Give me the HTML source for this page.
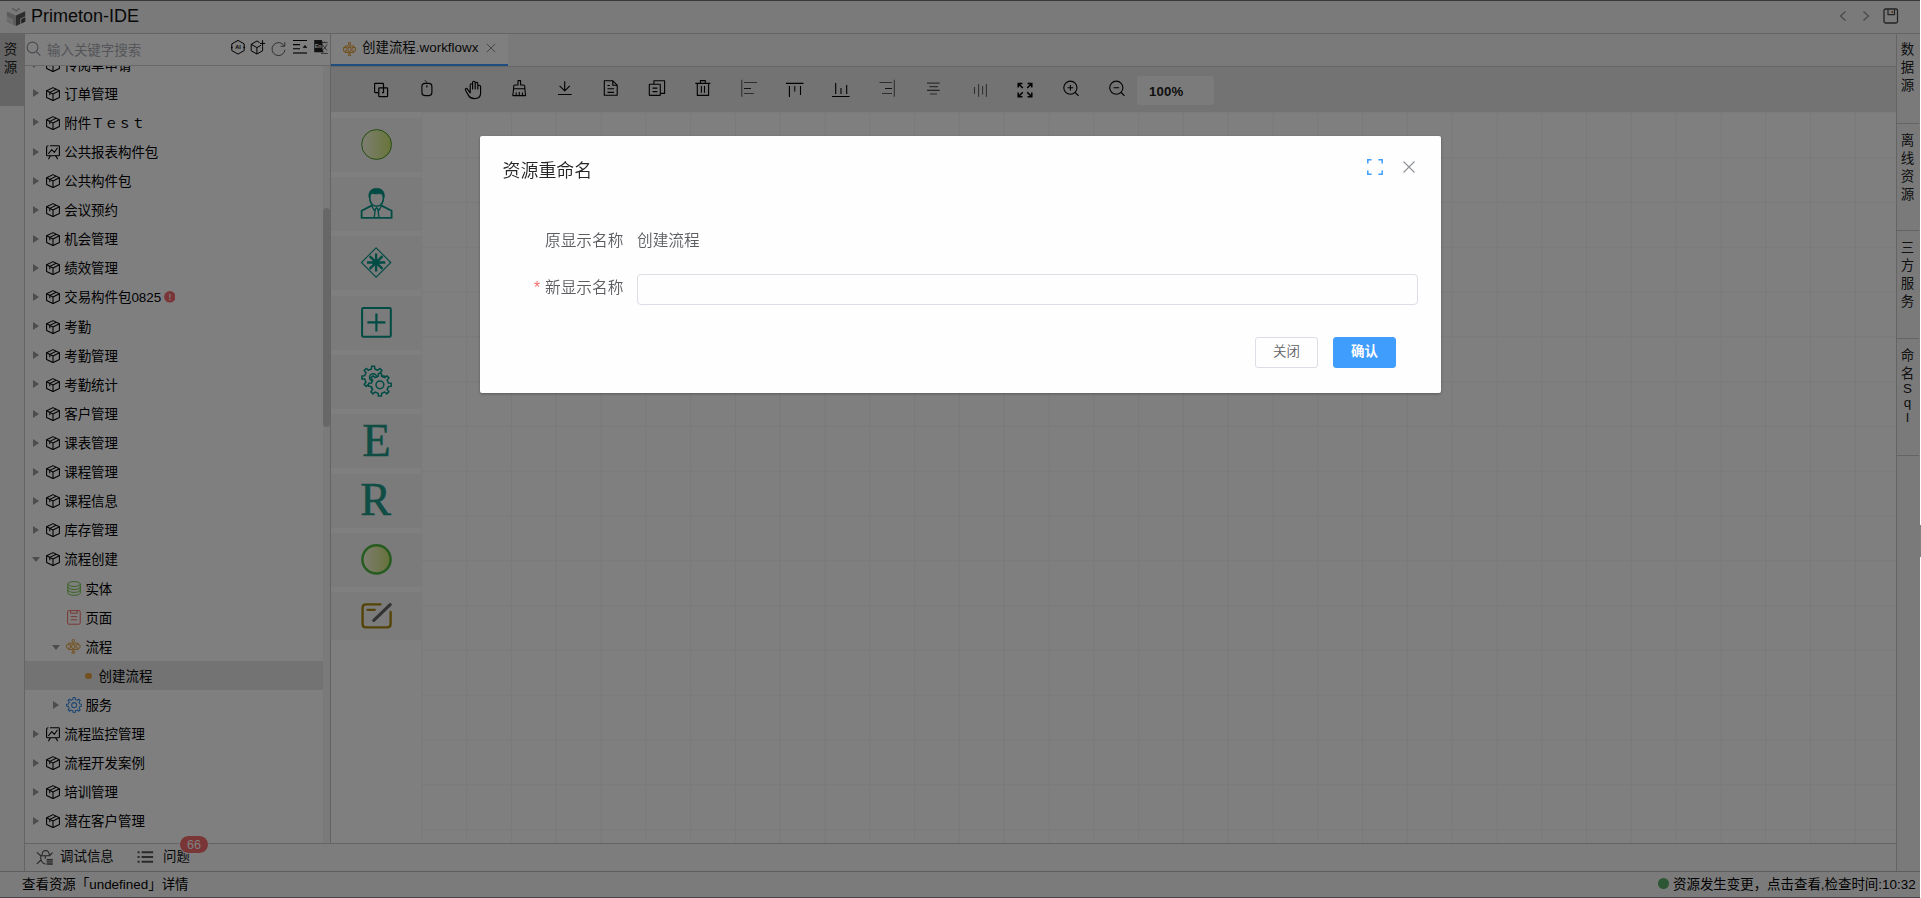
<!DOCTYPE html>
<html lang="zh-CN">
<head>
<meta charset="utf-8">
<title>Primeton-IDE</title>
<style>
*{box-sizing:border-box;margin:0;padding:0}
html,body{width:1921px;height:898px;overflow:hidden;background:#fff}
body{position:relative;font-family:"Liberation Sans","Noto Sans CJK SC",sans-serif;font-size:13.44px;color:#111;}
.abs{position:absolute}
#app{position:absolute;left:0;top:0;width:1920px;height:898px;background:#fff;overflow:hidden}
#topline{position:absolute;left:0;top:0;width:1920px;height:1px;background:#3a3a3a;z-index:30}
#botline{position:absolute;left:0;top:897px;width:1920px;height:1px;background:#4a4444;z-index:30}
#header{position:absolute;left:0;top:1px;width:1920px;height:33px;background:#f5f5f5;border-bottom:1px solid #c8c8c8}
#title{position:absolute;left:31px;top:4px;font-size:18px;line-height:22px;color:#111;letter-spacing:0}
#lstrip{position:absolute;left:0;top:34px;width:25px;height:837px;background:#f7f7f7;border-right:1px solid #c8c8c8}
#lstrip .act{position:absolute;left:0;top:0;width:24px;height:72px;background:#cacaca;color:#222;font-size:13.44px;line-height:18px;text-align:center;padding-top:7px;padding-right:3px}
#rstrip{position:absolute;left:1896px;top:34px;width:24px;height:837px;background:#f4f4f4;border-left:1px solid #c8c8c8}
#rstrip .t{position:absolute;left:-1px;width:23px;border-bottom:1px solid #c8c8c8;text-align:center;font-size:13.44px;line-height:18px;color:#222}
#search{position:absolute;left:25px;top:34px;width:305px;height:32px;background:#fff;border-bottom:1px solid #d0d0d0}
#search .ph{position:absolute;left:22px;top:7px;line-height:20px;color:#a8abb2;font-size:13.44px}
#treewrap{position:absolute;left:25px;top:66px;width:305px;height:777px;background:#fff;overflow:hidden}
#lborder{position:absolute;left:330px;top:34px;width:1px;height:809px;background:#c8c8c8}
#tree{position:absolute;left:0;top:-15.4px;width:298px}
.row{position:relative;height:29.12px;line-height:29.12px;white-space:nowrap;font-size:13.44px;color:#000}
.row.sel:before{content:"";position:absolute;left:0;top:-.8px;width:298px;height:28.7px;background:#e6e6e6}
.row .ar{position:absolute;top:9.6px;width:0;height:0;border-left:6px solid #9a9a9a;border-top:4px solid transparent;border-bottom:4px solid transparent}
.row .ad{position:absolute;top:12px;width:0;height:0;border-top:5.4px solid #9a9a9a;border-left:4.3px solid transparent;border-right:4.3px solid transparent}
.row svg{position:absolute;top:7px}
.row .tx{position:absolute;top:0}
#sbar{position:absolute;left:298px;top:0;width:7px;height:777px;background:#f4f4f4}
#sbar i{position:absolute;left:0;top:142px;width:7px;height:219px;border-radius:4px;background:#cfcfcf}
#bbar{position:absolute;left:25px;top:843px;width:1871px;height:28px;background:#fafafa;border-top:1px solid #c8c8c8}
#status{position:absolute;left:0;top:871px;width:1920px;height:26px;background:#f7f7f7;border-top:1px solid #bdbdbd;font-size:13.44px;line-height:26px;color:#000}
#tabbar{position:absolute;left:331px;top:34px;width:1565px;height:33px;background:#f5f5f5;border-bottom:1px solid #cacaca}
#tab{position:absolute;left:0;top:0;width:177px;height:32px;background:#fff;border-bottom:2px solid #409eff}
#toolbar{position:absolute;left:331px;top:67px;width:1565px;height:45px;background:#e6e6e6}
#toolbar svg{position:absolute}
#zoombox{position:absolute;left:806px;top:9px;width:77px;height:29px;background:#f7f7f7;border-radius:3px;font-size:13.2px;line-height:31px;padding-left:12px;color:#222;font-weight:bold;letter-spacing:.2px}
#palette{position:absolute;left:331px;top:112px;width:90px;height:731px;background:#fff}
.pi{position:absolute;left:0;width:90px;height:54px;background:#f6f6f6}
.pi svg{position:absolute}
#canvas{position:absolute;left:421px;top:112px;width:1475px;height:731px;background-color:#fff;
 background-image:linear-gradient(to right,#f3f3f3 1.12px,transparent 1.12px),linear-gradient(to bottom,#f3f3f3 1.12px,transparent 1.12px);
 background-size:44.8px 44.8px;background-position:.3px .4px}
#overlay{position:absolute;left:0;top:0;width:1920px;height:898px;background:rgba(0,0,0,.5);z-index:20}
#edge{position:absolute;left:1920px;top:525px;width:1px;height:32px;background:#808080;z-index:21}
#dialog{position:absolute;left:480px;top:136px;width:961px;height:257px;background:#fff;border-radius:2px;z-index:40;box-shadow:0 1px 3px rgba(0,0,0,.3);opacity:.9999}
#dialog .ttl{position:absolute;left:22.6px;top:20.9px;font-size:17.92px;line-height:28px;color:#262626;font-weight:350}
#dialog .lab{position:absolute;font-size:15.68px;line-height:24px;color:#5c5e62;font-weight:350}
#dialog .inp{position:absolute;left:157px;top:138px;width:781px;height:31px;border:1px solid #dcdfe6;border-radius:4px;background:#fff}
.btn{position:absolute;top:201px;width:63px;height:31px;border-radius:3px;font-size:13.44px;line-height:27.5px;text-align:center}
.btn.c{left:775px;border:1px solid #dcdfe6;background:#fff;color:#606266;font-weight:350}
.btn.p{left:853px;border:1px solid #409eff;background:#409eff;color:#fff;font-weight:bold}
</style>
</head>
<body>
<div id="app">
  <div id="header">
    <svg class="abs" style="left:6px;top:6px" width="20" height="20" viewBox="6 7 20 20">
      <polygon points="16,7 25.2,11.2 16,15.6 6.9,11.4" fill="#f0f0f0"/>
      <polygon points="6.9,11.4 16,15.6 16,26 6.9,21.4" fill="#b6b6b6"/>
      <polygon points="25.2,11.2 16,15.6 16,26 25.2,21.4" fill="#585858"/>
      <polyline points="12.2,8.3 16.2,10.9 19.7,8.3" fill="none" stroke="#a8a8a8" stroke-width="1.2"/>
      <polygon points="6.9,17.4 11.9,19.9 11.9,24 6.9,21.4" fill="#d4d4d4"/>
      <polygon points="6.9,16.6 12.7,19.4 12.7,24.4 11.9,24 11.9,19.9 6.9,17.4" fill="#f2f2f2"/>
      <polygon points="25.2,17.3 21.2,19.3 21.2,23.4 25.2,21.4" fill="#444"/>
      <polygon points="25.2,16.3 20.2,18.8 20.2,23.9 21.2,23.4 21.2,19.3 25.2,17.3" fill="#e8e8e8"/>
    </svg>
    <div id="title">Primeton-IDE</div>
    <svg class="abs" style="left:1836px;top:7.2px" width="66" height="18" viewBox="0 0 66 18" fill="none" stroke="#8a8a8a" stroke-width="1.1">
      <polyline points="9.5,3.5 4.5,8 9.5,12.5"/>
      <polyline points="27.5,3.5 32.5,8 27.5,12.5"/>
      <rect x="48" y="1" width="13.5" height="14" rx="1.5" stroke="#444" stroke-width="1.3"/>
      <path d="M52 1.5v5.2h6.5V1.5" stroke="#444" stroke-width="1.2"/>
      <rect x="55.6" y="3" width="1.4" height="2" fill="#b06020" stroke="none"/>
    </svg>
  </div>

  <div id="lstrip"><div class="act">资<br>源</div></div>

  <div id="search">
    <svg class="abs" style="left:1.2px;top:7.4px" width="16" height="16" viewBox="0 0 16 16" fill="none" stroke="#8f939b" stroke-width="1.1"><circle cx="6.5" cy="6.5" r="5.4"/><path d="M10.4 10.6L14.3 14.6"/></svg>
    <div class="ph">输入关键字搜索</div>
    <svg class="abs" style="left:0;top:0" width="305" height="31" viewBox="25 34 305 31" fill="none" stroke="#000" stroke-width="1" stroke-linejoin="round">
<path d="M238 40.4L244.2 43.9V50.6L238 54.1L231.8 50.6V43.9Z"/><circle cx="231.7" cy="47.3" r=".9" fill="#000" stroke="none"/><circle cx="244.3" cy="47.3" r=".9" fill="#000" stroke="none"/>
<text x="238" y="49.3" font-size="5.4" font-weight="bold" text-anchor="middle" fill="#000" stroke="none" font-family="Liberation Sans,sans-serif">AI</text>
<path d="M259.6 42.5L256.9 41L251.2 44.3V50.8L256.9 54L262.6 50.8V46.8M251.2 44.3L256.9 47.6L261 45.3M256.9 47.6V54"/><path d="M260 43.4H265.2M262.6 40.2V46.6"/>
<path d="M284.3 46.1A6.5 6.5 0 1 0 285 49.7" stroke="#606266"/><path d="M284.8 42.1V46.3H280.6" stroke="#606266"/>
<path d="M293 40.5H307M293 44.6H300M293 48.7H300" stroke-width="1.1"/><path d="M293 53H307" stroke="#555" stroke-width="1.7"/><path d="M303.2 47.6L305 45.4L306.8 47.6Z" fill="#000" stroke-width=".6"/>
<path d="M321 42.6H327.6M324.6 41.5V42.6M322 44.3L327 50.5M327 44.3Q325.5 48.5 321.5 50.8M321 53.4H327.8" stroke="#555" stroke-width=".9"/>
<path d="M314.2 40H321Q322.4 40 322.4 41.4V49.5L323.8 52.2H314.2Z" fill="#222" stroke="none"/>
<text x="318.2" y="48" font-size="5.4" font-weight="bold" text-anchor="middle" fill="#fff" stroke="none" font-family="Liberation Sans,sans-serif">En</text>
</svg>
  </div>

  <div id="treewrap">
    <div id="tree"><div class="row"><i class="ar" style="left:7.9px"></i><svg width="14" height="14" viewBox="0 0 14 14" fill="none" stroke="#000" stroke-width="1.05" stroke-linejoin="round" style="left:21px"><path d="M7 .6L13.4 3.8V10.6L7 13.6L.6 10.6V3.8Z"/><path d="M.6 3.8L7 7L13.4 3.8M7 7V13.6"/><path d="M10.2 2.2L3.8 5.4V8.3"/></svg><span class="tx" style="left:39.2px">传阅单申请</span></div>
<div class="row"><i class="ar" style="left:7.9px"></i><svg width="14" height="14" viewBox="0 0 14 14" fill="none" stroke="#000" stroke-width="1.05" stroke-linejoin="round" style="left:21px"><path d="M7 .6L13.4 3.8V10.6L7 13.6L.6 10.6V3.8Z"/><path d="M.6 3.8L7 7L13.4 3.8M7 7V13.6"/><path d="M10.2 2.2L3.8 5.4V8.3"/></svg><span class="tx" style="left:39.2px">订单管理</span></div>
<div class="row"><i class="ar" style="left:7.9px"></i><svg width="14" height="14" viewBox="0 0 14 14" fill="none" stroke="#000" stroke-width="1.05" stroke-linejoin="round" style="left:21px"><path d="M7 .6L13.4 3.8V10.6L7 13.6L.6 10.6V3.8Z"/><path d="M.6 3.8L7 7L13.4 3.8M7 7V13.6"/><path d="M10.2 2.2L3.8 5.4V8.3"/></svg><span class="tx" style="left:39.2px">附件Ｔｅｓｔ</span></div>
<div class="row"><i class="ar" style="left:7.9px"></i><svg width="14" height="15" viewBox="0 0 14 15" fill="none" stroke="#000" stroke-width="1.1" stroke-linecap="round" stroke-linejoin="round" style="left:21px"><path d="M4.4 .7H12.6Q13.4 .7 13.4 1.5V10Q13.4 10.8 12.6 10.8H1.4Q.6 10.8 .6 10V2.2Q.6 1 2 .7"/><path d="M4.2 11L2.7 13.8M9.8 11L11.5 13.8"/><path d="M2.6 8.5L5.8 4.7L8.4 7.3L11.2 3.2"/></svg><span class="tx" style="left:39.2px">公共报表构件包</span></div>
<div class="row"><i class="ar" style="left:7.9px"></i><svg width="14" height="14" viewBox="0 0 14 14" fill="none" stroke="#000" stroke-width="1.05" stroke-linejoin="round" style="left:21px"><path d="M7 .6L13.4 3.8V10.6L7 13.6L.6 10.6V3.8Z"/><path d="M.6 3.8L7 7L13.4 3.8M7 7V13.6"/><path d="M10.2 2.2L3.8 5.4V8.3"/></svg><span class="tx" style="left:39.2px">公共构件包</span></div>
<div class="row"><i class="ar" style="left:7.9px"></i><svg width="14" height="14" viewBox="0 0 14 14" fill="none" stroke="#000" stroke-width="1.05" stroke-linejoin="round" style="left:21px"><path d="M7 .6L13.4 3.8V10.6L7 13.6L.6 10.6V3.8Z"/><path d="M.6 3.8L7 7L13.4 3.8M7 7V13.6"/><path d="M10.2 2.2L3.8 5.4V8.3"/></svg><span class="tx" style="left:39.2px">会议预约</span></div>
<div class="row"><i class="ar" style="left:7.9px"></i><svg width="14" height="14" viewBox="0 0 14 14" fill="none" stroke="#000" stroke-width="1.05" stroke-linejoin="round" style="left:21px"><path d="M7 .6L13.4 3.8V10.6L7 13.6L.6 10.6V3.8Z"/><path d="M.6 3.8L7 7L13.4 3.8M7 7V13.6"/><path d="M10.2 2.2L3.8 5.4V8.3"/></svg><span class="tx" style="left:39.2px">机会管理</span></div>
<div class="row"><i class="ar" style="left:7.9px"></i><svg width="14" height="14" viewBox="0 0 14 14" fill="none" stroke="#000" stroke-width="1.05" stroke-linejoin="round" style="left:21px"><path d="M7 .6L13.4 3.8V10.6L7 13.6L.6 10.6V3.8Z"/><path d="M.6 3.8L7 7L13.4 3.8M7 7V13.6"/><path d="M10.2 2.2L3.8 5.4V8.3"/></svg><span class="tx" style="left:39.2px">绩效管理</span></div>
<div class="row"><i class="ar" style="left:7.9px"></i><svg width="14" height="14" viewBox="0 0 14 14" fill="none" stroke="#000" stroke-width="1.05" stroke-linejoin="round" style="left:21px"><path d="M7 .6L13.4 3.8V10.6L7 13.6L.6 10.6V3.8Z"/><path d="M.6 3.8L7 7L13.4 3.8M7 7V13.6"/><path d="M10.2 2.2L3.8 5.4V8.3"/></svg><span class="tx" style="left:39.2px">交易构件包0825</span><svg width="11.7" height="11.7" viewBox="0 0 12 12" style="left:138.6px;top:7.7px"><circle cx="6" cy="6" r="5.9" fill="#f56c6c"/><rect x="5.4" y="2.8" width="1.2" height="4.4" rx=".4" fill="#fff"/><circle cx="6" cy="8.7" r=".8" fill="#fff"/></svg></div>
<div class="row"><i class="ar" style="left:7.9px"></i><svg width="14" height="14" viewBox="0 0 14 14" fill="none" stroke="#000" stroke-width="1.05" stroke-linejoin="round" style="left:21px"><path d="M7 .6L13.4 3.8V10.6L7 13.6L.6 10.6V3.8Z"/><path d="M.6 3.8L7 7L13.4 3.8M7 7V13.6"/><path d="M10.2 2.2L3.8 5.4V8.3"/></svg><span class="tx" style="left:39.2px">考勤</span></div>
<div class="row"><i class="ar" style="left:7.9px"></i><svg width="14" height="14" viewBox="0 0 14 14" fill="none" stroke="#000" stroke-width="1.05" stroke-linejoin="round" style="left:21px"><path d="M7 .6L13.4 3.8V10.6L7 13.6L.6 10.6V3.8Z"/><path d="M.6 3.8L7 7L13.4 3.8M7 7V13.6"/><path d="M10.2 2.2L3.8 5.4V8.3"/></svg><span class="tx" style="left:39.2px">考勤管理</span></div>
<div class="row"><i class="ar" style="left:7.9px"></i><svg width="14" height="14" viewBox="0 0 14 14" fill="none" stroke="#000" stroke-width="1.05" stroke-linejoin="round" style="left:21px"><path d="M7 .6L13.4 3.8V10.6L7 13.6L.6 10.6V3.8Z"/><path d="M.6 3.8L7 7L13.4 3.8M7 7V13.6"/><path d="M10.2 2.2L3.8 5.4V8.3"/></svg><span class="tx" style="left:39.2px">考勤统计</span></div>
<div class="row"><i class="ar" style="left:7.9px"></i><svg width="14" height="14" viewBox="0 0 14 14" fill="none" stroke="#000" stroke-width="1.05" stroke-linejoin="round" style="left:21px"><path d="M7 .6L13.4 3.8V10.6L7 13.6L.6 10.6V3.8Z"/><path d="M.6 3.8L7 7L13.4 3.8M7 7V13.6"/><path d="M10.2 2.2L3.8 5.4V8.3"/></svg><span class="tx" style="left:39.2px">客户管理</span></div>
<div class="row"><i class="ar" style="left:7.9px"></i><svg width="14" height="14" viewBox="0 0 14 14" fill="none" stroke="#000" stroke-width="1.05" stroke-linejoin="round" style="left:21px"><path d="M7 .6L13.4 3.8V10.6L7 13.6L.6 10.6V3.8Z"/><path d="M.6 3.8L7 7L13.4 3.8M7 7V13.6"/><path d="M10.2 2.2L3.8 5.4V8.3"/></svg><span class="tx" style="left:39.2px">课表管理</span></div>
<div class="row"><i class="ar" style="left:7.9px"></i><svg width="14" height="14" viewBox="0 0 14 14" fill="none" stroke="#000" stroke-width="1.05" stroke-linejoin="round" style="left:21px"><path d="M7 .6L13.4 3.8V10.6L7 13.6L.6 10.6V3.8Z"/><path d="M.6 3.8L7 7L13.4 3.8M7 7V13.6"/><path d="M10.2 2.2L3.8 5.4V8.3"/></svg><span class="tx" style="left:39.2px">课程管理</span></div>
<div class="row"><i class="ar" style="left:7.9px"></i><svg width="14" height="14" viewBox="0 0 14 14" fill="none" stroke="#000" stroke-width="1.05" stroke-linejoin="round" style="left:21px"><path d="M7 .6L13.4 3.8V10.6L7 13.6L.6 10.6V3.8Z"/><path d="M.6 3.8L7 7L13.4 3.8M7 7V13.6"/><path d="M10.2 2.2L3.8 5.4V8.3"/></svg><span class="tx" style="left:39.2px">课程信息</span></div>
<div class="row"><i class="ar" style="left:7.9px"></i><svg width="14" height="14" viewBox="0 0 14 14" fill="none" stroke="#000" stroke-width="1.05" stroke-linejoin="round" style="left:21px"><path d="M7 .6L13.4 3.8V10.6L7 13.6L.6 10.6V3.8Z"/><path d="M.6 3.8L7 7L13.4 3.8M7 7V13.6"/><path d="M10.2 2.2L3.8 5.4V8.3"/></svg><span class="tx" style="left:39.2px">库存管理</span></div>
<div class="row"><i class="ad" style="left:6.7px"></i><svg width="14" height="14" viewBox="0 0 14 14" fill="none" stroke="#000" stroke-width="1.05" stroke-linejoin="round" style="left:21px"><path d="M7 .6L13.4 3.8V10.6L7 13.6L.6 10.6V3.8Z"/><path d="M.6 3.8L7 7L13.4 3.8M7 7V13.6"/><path d="M10.2 2.2L3.8 5.4V8.3"/></svg><span class="tx" style="left:39.2px">流程创建</span></div>
<div class="row"><svg width="14.2" height="15.1" viewBox="0 0 15 16" fill="none" stroke="#67c23a" stroke-width="1" style="left:41.6px;top:6.6px"><ellipse cx="7.5" cy="3.2" rx="6.6" ry="2.6"/><path d="M.9 3.2V12.6A6.6 2.6 0 0 0 14.1 12.6V3.2"/><path d="M.9 6.4A6.6 2.6 0 0 0 14.1 6.4M.9 9.5A6.6 2.6 0 0 0 14.1 9.5"/></svg><span class="tx" style="left:60.4px">实体</span></div>
<div class="row"><svg width="14" height="15" viewBox="0 0 14 15" fill="none" stroke="#f56c6c" stroke-width="1" style="left:41.6px;top:6.5px"><rect x=".6" y=".6" width="12.6" height="13.6" rx="1.2"/><path d="M3.6 .6V3.2H10.2V.6M3.6 6.6H10.2M3.6 9.8H10.2"/></svg><span class="tx" style="left:60.4px">页面</span></div>
<div class="row"><i class="ad" style="left:26.8px"></i><svg width="14.6" height="14.6" viewBox="0 0 14.6 14.6" style="left:41.6px;top:6.4px;margin-left:-.5px"><g fill="none" stroke="#e6a23c" stroke-width="1"><circle cx="7.3" cy="1.7" r="1.25"/><path d="M7.3 2.95V4.1M2.5 5.7V4.1H12.1V5.7M2.5 9.1V10.6H12.1V9.1M7.3 10.6V12.1"/><rect x=".6" y="5.7" width="3.9" height="3.4" rx=".4"/><rect x="10.1" y="5.7" width="3.9" height="3.4" rx=".4"/><rect x="5.8" y="5.5" width="3" height="3.8" rx=".3"/><path d="M5.9 14.1L6.6 12.1H8L8.7 14.1Z"/></g></svg><span class="tx" style="left:60.4px">流程</span></div>
<div class="row sel"><i style="position:absolute;left:60px;top:10.7px;width:6.8px;height:6.8px;border-radius:50%;background:#e6a23c"></i><span class="tx" style="left:73.6px">创建流程</span></div>
<div class="row"><i class="ar" style="left:28px"></i><svg width="16.3" height="16.3" viewBox="0 0 17 17" fill="none" stroke="#3a8ee6" stroke-width="1.15" stroke-linejoin="round" style="left:41.6px;top:6px;margin-left:-1px"><path d="M14.47 7.26L16.44 7.50L16.44 9.50L14.47 9.74L13.60 11.85L14.82 13.40L13.40 14.82L11.85 13.60L9.74 14.47L9.50 16.44L7.50 16.44L7.26 14.47L5.15 13.60L3.60 14.82L2.18 13.40L3.40 11.85L2.53 9.74L0.56 9.50L0.56 7.50L2.53 7.26L3.40 5.15L2.18 3.60L3.60 2.18L5.15 3.40L7.26 2.53L7.50 0.56L9.50 0.56L9.74 2.53L11.85 3.40L13.40 2.18L14.82 3.60L13.60 5.15Z"/><circle cx="8.5" cy="8.5" r="2.6"/></svg><span class="tx" style="left:60.4px">服务</span></div>
<div class="row"><i class="ar" style="left:7.9px"></i><svg width="14" height="15" viewBox="0 0 14 15" fill="none" stroke="#000" stroke-width="1.1" stroke-linecap="round" stroke-linejoin="round" style="left:21px"><path d="M4.4 .7H12.6Q13.4 .7 13.4 1.5V10Q13.4 10.8 12.6 10.8H1.4Q.6 10.8 .6 10V2.2Q.6 1 2 .7"/><path d="M4.2 11L2.7 13.8M9.8 11L11.5 13.8"/><path d="M2.6 8.5L5.8 4.7L8.4 7.3L11.2 3.2"/></svg><span class="tx" style="left:39.2px">流程监控管理</span></div>
<div class="row"><i class="ar" style="left:7.9px"></i><svg width="14" height="14" viewBox="0 0 14 14" fill="none" stroke="#000" stroke-width="1.05" stroke-linejoin="round" style="left:21px"><path d="M7 .6L13.4 3.8V10.6L7 13.6L.6 10.6V3.8Z"/><path d="M.6 3.8L7 7L13.4 3.8M7 7V13.6"/><path d="M10.2 2.2L3.8 5.4V8.3"/></svg><span class="tx" style="left:39.2px">流程开发案例</span></div>
<div class="row"><i class="ar" style="left:7.9px"></i><svg width="14" height="14" viewBox="0 0 14 14" fill="none" stroke="#000" stroke-width="1.05" stroke-linejoin="round" style="left:21px"><path d="M7 .6L13.4 3.8V10.6L7 13.6L.6 10.6V3.8Z"/><path d="M.6 3.8L7 7L13.4 3.8M7 7V13.6"/><path d="M10.2 2.2L3.8 5.4V8.3"/></svg><span class="tx" style="left:39.2px">培训管理</span></div>
<div class="row"><i class="ar" style="left:7.9px"></i><svg width="14" height="14" viewBox="0 0 14 14" fill="none" stroke="#000" stroke-width="1.05" stroke-linejoin="round" style="left:21px"><path d="M7 .6L13.4 3.8V10.6L7 13.6L.6 10.6V3.8Z"/><path d="M.6 3.8L7 7L13.4 3.8M7 7V13.6"/><path d="M10.2 2.2L3.8 5.4V8.3"/></svg><span class="tx" style="left:39.2px">潜在客户管理</span></div></div>
    <div id="sbar"><i></i></div>
  </div>
  <div id="lborder"></div>

  <div id="tabbar"><div id="tab"><svg class="abs" style="left:12.4px;top:7.6px" width="13" height="14.4" viewBox="0 0 14.6 14.6" preserveAspectRatio="none"><g fill="none" stroke="#e6a23c" stroke-width="1.05"><circle cx="7.3" cy="1.7" r="1.25"/><path d="M7.3 2.95V4.1M2.5 5.7V4.1H12.1V5.7M2.5 9.1V10.6H12.1V9.1M7.3 10.6V12.1"/><rect x=".6" y="5.7" width="3.9" height="3.4" rx=".4"/><rect x="10.1" y="5.7" width="3.9" height="3.4" rx=".4"/><rect x="5.8" y="5.5" width="3" height="3.8" rx=".3"/><path d="M5.9 14.1L6.6 12.1H8L8.7 14.1Z"/></g></svg><span class="abs" style="left:31px;top:3.6px;line-height:20px;font-size:13.44px;color:#111;white-space:nowrap">创建流程.workflowx</span><svg class="abs" style="left:154.5px;top:9.4px" width="10" height="10" viewBox="0 0 10 10" fill="none" stroke="#8c8c8c" stroke-width="1"><path d="M.8 .8L9.2 9.2M9.2 .8L.8 9.2"/></svg></div></div>
  <div id="toolbar"><svg style="left:0;top:0" width="1565" height="45" viewBox="331 67 1565 45" fill="none" stroke="#000" stroke-width="1.2" stroke-linejoin="round">
<path d="M378.8 92.6H375.4Q374.6 92.6 374.6 91.8V84.2Q374.6 83.4 375.4 83.4H382.7Q383.5 83.4 383.5 84.2V92.6H382"/><rect x="378.8" y="87.8" width="8.8" height="8.9" rx=".8" />
<rect x="421.9" y="83.4" width="10" height="12.2" rx="3" stroke-width="1.1"/><path d="M426.9 85.2V87.6" stroke-width="1.1"/><path d="M426.9 83.4Q427 81.2 424.6 80.3" stroke="#444" stroke-width="1"/>
<path d="M470.2 92.8V84.9A1.2 1.2 0 0 1 472.6 84.9V89M472.6 89V82.6A1.3 1.3 0 0 1 475.2 82.6V89M475.2 89V83.6A1.3 1.3 0 0 1 477.8 83.6V89M477.8 89V86.7A1.4 1.4 0 0 1 480.6 86.7V93C480.6 96.8 478 98.6 474.4 98.6C471.3 98.6 469.8 97.6 468.6 95.6L465.5 90.2C464.8 88.9 466.3 87.8 467.2 88.9L470.2 92.8" stroke-width="1.15" stroke-linecap="round"/>
<g stroke-width="1.05"><path d="M518 80.6H520.6V85H523.5Q524.8 85 524.8 86.5V88.7H513.6V86.5Q513.6 85 515 85H518Z"/><path d="M513.6 88.7L512.8 95.6H525.6L524.8 88.7M516.2 92.5V95.6M519.3 92V95.6M522.5 92.5V95.6"/></g>
<path d="M564.7 81.2V90.4M559.6 85.9L564.7 90.8L569.8 85.9M558 94.5H571.7" stroke-width="1.1"/>
<g stroke-width="1.1"><path d="M604.3 80.8H612.8L617.2 85.2V95.2H604.3Z"/><path d="M612.8 80.8V85.2H617.2M607.5 85.5H609.8M607.5 88.8H614M607.5 92.4H614"/></g>
<g stroke-width="1.1"><rect x="649.3" y="84.2" width="11" height="11.2" rx=".5"/><path d="M653.9 84V80.7H664.6V93.4H660.5M652.5 88.1H657.4M652.5 91.6H657.4"/></g>
<g stroke-width="1.1"><path d="M695.3 83.4H710.4M700.4 83.2V80.6H705.3V83.2M697.3 83.6V95.4H708.6V83.6M701.4 86V92.8M704.5 86V92.8"/></g>
<g stroke="#5c5c5c" stroke-width="1.05"><path d="M741.8 79.8V96.7"/><path d="M744 82.4H757M744 93.5H754"/><path d="M744 88.5H751" stroke="#222"/></g>
<g stroke-width="1.1"><path d="M786 83.4H803.5M789.4 86V97M800.5 86V95"/><path d="M794.7 86V91.6" stroke="#444" stroke-width="1.5"/></g>
<g stroke-width="1.1"><path d="M832 96.5H849.6M835.7 83V94M846.7 85V94"/><path d="M841 88V94" stroke="#444" stroke-width="1.5"/></g>
<g stroke="#5c5c5c" stroke-width="1.05"><path d="M894.3 79.8V96.7"/><path d="M879.5 82.4H892M882 93.5H892"/><path d="M885 88.5H892" stroke="#222"/></g>
<g stroke="#5c5c5c" stroke-width="1.1"><path d="M927 83.1H939.7M929.5 86.6H938M930 94H937"/><path d="M927 90.3H939.7" stroke="#333"/></g>
<g stroke="#5c5c5c" stroke-width="1.05"><path d="M974.5 87V94M978.6 84V96.7M982.6 86V94.5M986.4 84V96.7"/></g>
<g stroke-width="1.5" stroke-linejoin="miter"><path d="M1022.4 83.4H1018.2V87.6M1018.4 83.6L1022.8 88M1027.6 83.4H1031.8V87.6M1031.6 83.6L1027.2 88M1022.4 96.8H1018.2V92.6M1018.4 96.6L1022.8 92.2M1027.6 96.8H1031.8V92.6M1031.6 96.6L1027.2 92.2"/></g>
<g stroke-width="1.1"><circle cx="1070.4" cy="87.7" r="6.6"/><path d="M1075.2 92.5L1078.6 95.9M1067.6 87.7H1073.2M1070.4 84.9V90.5"/></g>
<g stroke-width="1.1"><circle cx="1116.3" cy="87.7" r="6.6"/><path d="M1121.1 92.5L1124.5 95.9M1113.5 87.7H1119.1"/></g>
</svg><div id="zoombox">100%</div></div>
  <div id="palette"><div class="pi" style="top:5.7px;height:54.0px"></div><div class="pi" style="top:65.0px;height:54.0px"></div><div class="pi" style="top:124.3px;height:54.0px"></div><div class="pi" style="top:183.6px;height:54.0px"></div><div class="pi" style="top:242.9px;height:54.0px"></div><div class="pi" style="top:302.2px;height:54.0px"></div><div class="pi" style="top:361.5px;height:54.0px"></div><div class="pi" style="top:420.8px;height:54.0px"></div><div class="pi" style="top:480.1px;height:48.4px"></div><svg class="abs" style="left:0;top:0" width="90" height="731" viewBox="331 112 90 731" fill="none">
<defs><linearGradient id="gs" x1="0" y1="0" x2="1" y2="0"><stop offset="0" stop-color="#fdfde6"/><stop offset="1" stop-color="#d0ea74"/></linearGradient>
<linearGradient id="ge" x1="0" y1="0" x2="1" y2="0"><stop offset="0" stop-color="#fbfbe2"/><stop offset="1" stop-color="#d0e274"/></linearGradient></defs>
<circle cx="376.6" cy="144.5" r="14.9" fill="url(#gs)" stroke="#4a9a20" stroke-width="1"/>
<g transform="translate(360.7,188)" stroke="#009688" stroke-width="1.7" stroke-linejoin="round">
<path d="M8.3 9.5C7.3 3.5 11 .3 15.9 .3C20.8 .3 24.5 3.5 23.5 9.5L22.4 9.8C22.2 7.2 21.2 6 19.6 5.8C17 5.5 15 6.6 12 5.4C10.2 5.7 9.5 7.2 9.3 9.8Z" fill="#009688" stroke-width=".6"/>
<path d="M8.9 8C8.9 14 11.2 18.3 15.9 18.3C20.6 18.3 22.9 14 22.9 8" stroke-width="1.6"/>
<path d="M11.4 17.4L.9 22.7V29.9H30.9V22.7L20.4 17.4" stroke-width="1.8"/>
<path d="M11 17.8L13.4 22.2L15.9 19.8L18.4 22.2L20.8 17.8M14.6 21.4L13.5 29.6M17.2 21.4L18.3 29.6" stroke-width="1.3"/>
</g>
<g stroke="#009688"><path d="M376.1 247.8L390.8 262.5L376.1 277.2L361.4 262.5Z" stroke-width="1.1"/>
<path d="M367 262.5H385.2M376.1 253.4V271.6M369.7 256.1L382.5 268.9M382.5 256.1L369.7 268.9" stroke-width="2.3"/></g>
<g stroke="#009688"><rect x="362.1" y="308.1" width="28.7" height="28.7" rx="1.2" stroke-width="2"/><path d="M367.4 322.4H385.4M376.4 313.4V331.4" stroke-width="2.2"/></g>
<g stroke="#009688" stroke-width="1.5" stroke-linejoin="round"><path d="M381.53 375.72L384.30 375.90L384.30 378.90L381.53 379.08L380.25 382.18L382.08 384.26L379.96 386.38L377.88 384.55L374.78 385.83L374.60 388.60L371.60 388.60L371.42 385.83L368.32 384.55L366.24 386.38L364.12 384.26L365.95 382.18L364.67 379.08L361.90 378.90L361.90 375.90L364.67 375.72L365.95 372.62L364.12 370.54L366.24 368.42L368.32 370.25L371.42 368.97L371.60 366.20L374.60 366.20L374.78 368.97L377.88 370.25L379.96 368.42L382.08 370.54L380.25 372.62Z"/><circle cx="373.1" cy="377.4" r="3.6"/>
<path d="M388.43 383.10L391.20 383.28L391.20 386.32L388.43 386.50L387.13 389.63L388.96 391.72L386.82 393.86L384.73 392.03L381.60 393.33L381.42 396.10L378.38 396.10L378.20 393.33L375.07 392.03L372.98 393.86L370.84 391.72L372.67 389.63L371.37 386.50L368.60 386.32L368.60 383.28L371.37 383.10L372.67 379.97L370.84 377.88L372.98 375.74L375.07 377.57L378.20 376.27L378.38 373.50L381.42 373.50L381.60 376.27L384.73 377.57L386.82 375.74L388.96 377.88L387.13 379.97Z" fill="#f6f6f6"/><circle cx="379.9" cy="384.8" r="3.9"/></g>
<text x="376.4" y="455.8" font-family="Liberation Serif,serif" font-size="46.5" text-anchor="middle" fill="#1f9a8a" stroke="#1f9a8a" stroke-width=".5">E</text>
<text x="375.6" y="514.7" font-family="Liberation Serif,serif" font-size="46" text-anchor="middle" fill="#1f9a8a" stroke="#1f9a8a" stroke-width=".5">R</text>
<circle cx="376.5" cy="559.4" r="14.1" fill="url(#ge)" stroke="#4cb83e" stroke-width="2.5"/>
<g stroke="#aa8810" stroke-width="2.4" stroke-linecap="round"><path d="M380.5 604.4H366Q362.6 604.4 362.6 607.8V624Q362.6 627.4 366 627.4H387.2Q390.6 627.4 390.6 624V612"/><path d="M367.4 609.8H374.8" stroke-width="2.2"/><path d="M390.2 604.6L373.8 620.4" stroke="#666" stroke-width="3.2"/></g>
</svg></div>
  <div id="canvas"></div>

  <div id="rstrip">
    <div class="t" style="top:0;height:90px;padding-top:7px">数<br>据<br>源</div>
    <div class="t" style="top:90px;height:107px;padding-top:8px">离<br>线<br>资<br>源</div>
    <div class="t" style="top:197px;height:108px;padding-top:8px">三<br>方<br>服<br>务</div>
    <div class="t" style="top:305px;height:117px;padding-top:8px">命<br>名<br><span style="display:block;line-height:14.6px;margin-top:-1.2px">S<br>q<br>l</span></div>
  </div>

  <div id="bbar"><svg class="abs" style="left:0;top:0" width="220" height="28" viewBox="25 844 220 28" fill="none" stroke="#4a4a4a" stroke-width="1.1" stroke-linecap="round">
<path d="M42 854.6Q42.4 850.7 45.6 850.5Q48.8 850.7 49.3 854.6M37.2 852.6L40.6 855.7H49.6L52.2 852.8M40.8 855.9Q40.2 862.4 45 864M37.2 863.6L41 860M45.3 855.9V858.2"/>
<path d="M46.6 859.8H52.8M46.6 861.9H52.8M46.6 864H52.8" stroke-width="1.4" stroke-linecap="butt"/>
<g stroke="#555" stroke-width="2.1" stroke-linecap="butt"><path d="M137.6 852.2H139.6M141.6 852.2H153.1M137.6 857H139.6M141.6 857H153.1M137.6 861.8H139.6M141.6 861.8H153.1"/></g>
</svg>
<span class="abs" style="left:35px;top:2px;line-height:22px;font-size:13.44px;color:#111">调试信息</span>
<span class="abs" style="left:138px;top:2px;line-height:22px;font-size:13.44px;color:#111">问题</span>
<span class="abs" style="left:153.6px;top:-9.4px;width:30.6px;height:19.6px;border:1px solid #fff;border-radius:10px;background:#f56c6c;color:#fff;font-size:12.5px;line-height:18.4px;text-align:center;z-index:3">66</span></div>
  <div id="status">
    <span class="abs" style="left:22px;top:0">查看资源「undefined」详情</span>
    <span class="abs" style="left:1657.9px;top:5.9px;width:11.1px;height:11.1px;border-radius:50%;background:#5aac68"></span>
    <span class="abs" style="left:1673px;top:0;white-space:nowrap">资源发生变更，点击查看,检查时间:10:32</span>
  </div>
</div>
<div id="topline"></div><div id="botline"></div>
<div id="overlay"></div>
<div id="edge"></div>

<div id="dialog">
  <div class="ttl">资源重命名</div>
  <svg class="abs" style="left:886px;top:22px" width="18" height="18" viewBox="0 0 18 18" fill="none" stroke="#409eff" stroke-width="1.5"><path d="M1.8 5.6V1.8H5.6M12.4 1.8H16.2V5.6M16.2 12.4V16.2H12.4M5.6 16.2H1.8V12.4"/></svg>
  <svg class="abs" style="left:922px;top:24px" width="14" height="14" viewBox="0 0 14 14" fill="none" stroke="#909399" stroke-width="1.1"><path d="M1.5 1.5L12.5 12.5M12.5 1.5L1.5 12.5"/></svg>
  <div class="lab" style="left:65px;top:93px">原显示名称</div>
  <div class="lab" style="left:157px;top:93px">创建流程</div>
  <div class="lab" style="left:54px;top:140px;color:#f56c6c">*</div>
  <div class="lab" style="left:65px;top:140px">新显示名称</div>
  <div class="inp"></div>
  <div class="btn c">关闭</div>
  <div class="btn p">确认</div>
</div>
</body>
</html>
